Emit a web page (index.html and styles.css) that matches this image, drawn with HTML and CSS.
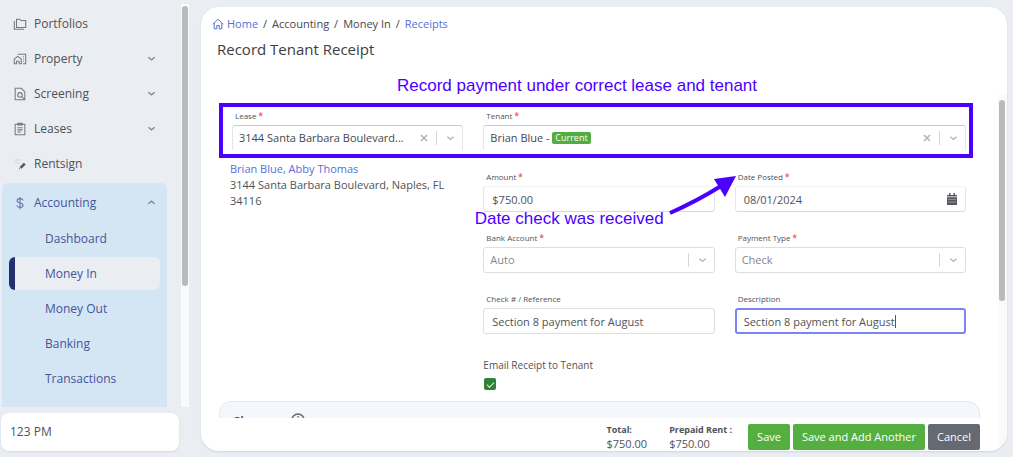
FILE: index.html
```html
<!DOCTYPE html>
<html lang="en">
<head>
<meta charset="utf-8">
<title>Record Tenant Receipt</title>
<link rel="stylesheet" href="styles.css">
</head>
<body>
<svg class="sprite" aria-hidden="true">
  <symbol id="down" viewBox="0 0 10 10"><path d="M1.5 3.500 L5 6.500 L8.500 3.500" fill="none" stroke="currentColor" stroke-width="1.4"/></symbol>
  <symbol id="clear" viewBox="0 0 10 10"><path d="M2 2 L8 8 M8 2 L2 8" fill="none" stroke="currentColor" stroke-width="1.6"/></symbol>
</svg>
<div class="app">
  <aside class="sidebar">
    <div class="nav-area">
      <nav class="nav">
        <a class="item" href="#"><svg class="icon" viewBox="0 0 16 16"><path d="M4 2.500h3.500l1.500 1.500h5.500v8H4zM1.500 4.500v9.500h11"/></svg><span>Portfolios</span></a>
        <a class="item" href="#"><svg class="icon" viewBox="0 0 16 16"><path d="M1.500 13.500v-5.500l4-3 4 3v5.500h-2.500v-3h-3v3zM6 3V2.500h8.500v11h-3M11.500 5.500h1M11.500 8h1M11.500 10.500h1"/></svg><span>Property</span><svg class="chev"><use href="#down"/></svg></a>
        <a class="item" href="#"><svg class="icon" viewBox="0 0 16 16"><path d="M2.500 1.500h7l4 4v9h-11zM10 11l3 3"/><circle cx="8" cy="9" r="2.600"/></svg><span>Screening</span><svg class="chev"><use href="#down"/></svg></a>
        <a class="item" href="#"><svg class="icon" viewBox="0 0 16 16"><path d="M2.500 2.500h11v12h-11zM5.500 1.500h5v2h-5zM5 6.500h6M5 9h6M5 11.500h4"/></svg><span>Leases</span><svg class="chev"><use href="#down"/></svg></a>
        <a class="item" href="#"><svg class="icon" viewBox="0 0 16 16"><path class="faint" d="M2 3.500h7M2 6.500h5"/><path class="pen" d="M8.500 12.500l5-5"/><path d="M7 14l1-1"/></svg><span>Rentsign</span></a>
        <div class="group">
          <a class="item" href="#"><svg class="icon" viewBox="0 0 16 16"><path d="M11.500 5C11 3.500 9.800 3 8 3 6 3 4.700 3.900 4.700 5.400 4.700 9 11.500 6.800 11.500 10.500 11.500 12 10 13 8 13 6 13 4.800 12.300 4.300 10.800M8 1v14"/></svg><span>Accounting</span><svg class="chev flip"><use href="#down"/></svg></a>
          <div class="sub">
            <a href="#">Dashboard</a>
            <a href="#" class="active" aria-current="page">Money In</a>
            <a href="#">Money Out</a>
            <a href="#">Banking</a>
            <a href="#">Transactions</a>
          </div>
        </div>
      </nav>
      <div class="rail"><div class="thumb nav-thumb"></div></div>
    </div>
    <div class="company">123 PM</div>
  </aside>

  <main class="card">
    <header class="head">
      <nav class="crumbs" aria-label="Breadcrumb">
        <a href="#"><svg class="home" viewBox="0 0 12 12"><path d="M.8 6.200 6 1.300l5.200 4.900M2.200 5.200v5.600h2.600V7.500h2.400v3.300h2.600V5.200"/></svg>Home</a><i>/</i><span>Accounting</span><i>/</i><span>Money In</span><i>/</i><a href="#">Receipts</a>
      </nav>
      <h1>Record Tenant Receipt</h1>
      <p class="note top-note">Record payment under correct lease and tenant</p>
    </header>

    <div class="scroll">
      <form class="form" id="receipt">
        <div class="frame"></div>
        <div class="left">
          <div class="field">
            <label for="lease">Lease <b>*</b></label>
            <div class="picker open">
              <select id="lease"><option>3144 Santa Barbara Boulevard...</option></select>
              <div class="tools"><button type="button" aria-label="Clear lease"><svg><use href="#clear"/></svg></button><svg class="arrow"><use href="#down"/></svg></div>
            </div>
          </div>
          <address><a href="#">Brian Blue, Abby Thomas</a><br>3144 Santa Barbara Boulevard, Naples, FL 34116</address>
        </div>
        <div class="fields">
          <div class="field wide">
            <label for="tenant">Tenant <b>*</b></label>
            <div class="picker open">
              <select id="tenant"><option>Brian Blue -</option></select>
              <span class="badge">Current</span>
              <div class="tools"><button type="button" aria-label="Clear tenant"><svg><use href="#clear"/></svg></button><svg class="arrow"><use href="#down"/></svg></div>
            </div>
          </div>
          <div class="field">
            <label for="amount">Amount <b>*</b></label>
            <input class="text soft" id="amount" value="$750.00">
          </div>
          <div class="field dated">
            <label for="date">Date Posted <b>*</b></label>
            <div class="picker soft">
              <input class="bare" id="date" value="08/01/2024">
              <svg class="calendar" viewBox="0 0 10 12"><path d="M0 2h10v1.600H0zM2 0h1.500v2H2zM6.500 0H8v2H6.500zM0 4.200h10V12H0z"/><path class="cells" d="M1.500 6.500h7M1.500 9h7"/></svg>
            </div>
            <p class="note date-note">Date check was received</p>
            <svg class="pointer" viewBox="0 0 68 44"><path d="M1 41Q28 29 52 14" fill="none" stroke="#4b00ff" stroke-width="4"/><path d="M67 4 45 7l11 18z" fill="#4b00ff"/></svg>
          </div>
          <div class="field">
            <label for="bank">Bank Account <b>*</b></label>
            <div class="picker">
              <select class="muted" id="bank"><option>Auto</option></select>
              <div class="tools"><svg class="arrow"><use href="#down"/></svg></div>
            </div>
          </div>
          <div class="field">
            <label for="type">Payment Type <b>*</b></label>
            <div class="picker">
              <select class="muted" id="type"><option>Check</option></select>
              <div class="tools"><svg class="arrow"><use href="#down"/></svg></div>
            </div>
          </div>
          <div class="field">
            <label for="ref">Check # / Reference</label>
            <input class="text" id="ref" value="Section 8 payment for August">
          </div>
          <div class="field">
            <label for="desc">Description</label>
            <div class="picker focus">
              <input class="bare" id="desc" value="Section 8 payment for August">
              <span class="caret"></span>
            </div>
          </div>
          <div class="email wide">
            <label for="mail">Email Receipt to Tenant</label>
            <input type="checkbox" id="mail" checked>
          </div>
        </div>
      </form>
      <section class="panel"><h2>Charges</h2><svg viewBox="0 0 14 14"><circle cx="7" cy="7" r="6"/><path d="M7 3v1.500M7 6v4.500"/></svg></section>
    </div>

    <div class="rail main-rail"><div class="thumb main-thumb"></div></div>

    <footer class="foot">
      <dl>
        <div><dt>Total:</dt><dd>$750.00</dd></div>
        <div><dt>Prepaid Rent :</dt><dd>$750.00</dd></div>
      </dl>
      <div class="actions">
        <button form="receipt">Save</button>
        <button form="receipt">Save and Add Another</button>
        <button type="button" class="cancel">Cancel</button>
      </div>
    </footer>
  </main>
</div>
</body>
</html>
```
FILE: styles.css
```css
* { box-sizing: border-box; }
body { margin: 0; background: #eaedf2; color: #505357; font: 11px/16px "Open Sans", "Noto Sans", sans-serif; }
a { color: #5570d8; text-decoration: none; }
button, input, select { font: inherit; color: inherit; }
p, h1, h2, dl, dd { margin: 0; }
.sprite { position: absolute; width: 0; height: 0; }
.app { display: flex; gap: 12px; height: 100vh; padding-right: 6px; overflow: hidden; }

.sidebar { width: 189px; flex: none; display: flex; flex-direction: column; gap: 6px; padding-bottom: 6px; }
.nav-area { flex: 1; min-height: 0; display: flex; justify-content: space-between; overflow: hidden; }
.nav { width: 167px; padding: 7px 0 0 2px; display: flex; flex-direction: column; gap: 2px; }
.item { flex: none; height: 33px; padding: 0 11px; display: flex; align-items: center; gap: 7px; color: #4e5155; font-size: 12px; }
.item span { flex: 1; }
.icon { width: 14px; height: 14px; fill: none; stroke: #77797d; stroke-width: 1.2; }
.icon .faint { stroke: #d3d6db; }
.icon .pen { stroke: #55585c; stroke-width: 3; }
.chev { width: 9px; height: 9px; color: #85888d; }
.flip { transform: rotate(180deg); }
.group { flex: none; height: 300px; margin-top: 1px; padding-top: 3px; border-radius: 6px; background: #d4e6f4; }
.group .item, .sub a { color: #46549a; }
.group .icon { stroke: #6674ab; }
.sub { display: flex; flex-direction: column; gap: 2px; padding: 3px 7px; }
.sub a { height: 33px; padding-left: 36px; font-size: 12px; line-height: 33px; border-radius: 6px; }
.sub .active { padding-left: 30px; border-left: 6px solid #262f70; background: #eaedf2; }
.company { height: 38px; margin: 0 10px 0 1px; padding: 0 9px; border-radius: 8px; background: #fff; box-shadow: 0 1px 2px #d5dae3; line-height: 38px; font-size: 12px; }

.rail { width: 8px; background: #fafafa; }
.nav-area .rail { margin-top: 4px; }
.thumb { width: 6px; margin: 0 auto; border-radius: 3px; background: #bababa; }
.nav-thumb { height: 280px; margin-top: 2px; }

.card { flex: 1; min-width: 0; margin: 7px 0 6px; display: grid; grid-template: auto 1fr 33px / 1fr 9px; border-radius: 18px; background: #fff; box-shadow: 0 1px 2px #cfd6e2; overflow: hidden; }
.head { grid-column: 1 / -1; position: relative; height: 88px; padding: 9px 11px; }
.crumbs { display: flex; color: #45484c; font-weight: 500; }
.crumbs i { width: 14px; text-align: center; font-style: normal; }
.crumbs a { display: flex; align-items: center; gap: 3px; }
.home { width: 12px; height: 12px; fill: none; stroke: #5570d8; stroke-width: 1; }
h1 { padding: 7px 5px; font-size: 15px; line-height: 20px; font-weight: 500; color: #3c3e41; }
.note { position: absolute; color: #4b00ff; font: 17px/20px "Liberation Sans", sans-serif; white-space: nowrap; }
.top-note { left: 196px; top: 69px; }

.scroll { min-height: 0; overflow: hidden; padding: 0 18px; }
.form { position: relative; margin: 15px 14px 0 13px; display: grid; grid-template-columns: repeat(3, minmax(0, 1fr)); gap: 20px; }
.frame { position: absolute; z-index: 1; top: -7px; left: -13px; right: -7px; height: 55px; border: 4px solid #4b00ff; pointer-events: none; }
.left { display: flex; flex-direction: column; gap: 10px; }
address { margin: 0 -2px; font-style: normal; }
.fields { grid-column: span 2; display: grid; grid-template-columns: repeat(2, minmax(0, 1fr)); gap: 20px; }
.wide { grid-column: 1 / -1; }
.field { display: flex; flex-direction: column; gap: 3px; }
.field label { height: 12px; padding-left: 3px; font-size: 8px; line-height: 12px; font-weight: 500; }
.field b { color: #e86a6a; }
.text, .picker { width: 100%; height: 26px; border: 1px solid #dcdee2; border-radius: 3px; background: #fff; }
.text { padding: 0 8px; outline: 0; }
.picker { display: grid; grid-template: 100% / 100%; align-items: center; }
.picker > * { grid-area: 1 / 1; }
.picker select { width: 100%; height: 100%; padding: 0 6px; border: 0; outline: 0; appearance: none; background: none; }
.bare { width: 100%; height: 100%; padding: 0 8px; border: 0; outline: 0; background: none; }
.open { border-color: #c9cbce #e3e5e8 transparent; }
.open select { color: #45484b; }
.soft { border-color: #f3f3f5 #e3e6ec #d5d9e2; }
.focus { border: 2px solid #7b83f5; }
.focus .bare { padding: 0 7px; }
.caret { width: 1px; height: 13px; margin-left: 158px; background: #555; }
.picker .muted { color: #85888c; }
.tools { justify-self: end; display: flex; align-items: center; gap: 7px; padding-right: 7px; color: #b3b5b8; pointer-events: none; }
.tools button { display: flex; padding: 0; border: 0; background: none; color: inherit; pointer-events: auto; }
.tools button svg { width: 10px; height: 10px; }
.arrow { width: 19px; height: 14px; padding: 2px 0 2px 9px; border-left: 1px solid #d5d7da; }
.badge { justify-self: start; margin-left: 68px; padding: 0 3px; border-radius: 2px; background: #4fae3f; color: #fff; font-size: 9px; line-height: 12px; font-weight: 500; pointer-events: none; }
.calendar { justify-self: end; width: 10px; height: 12px; margin-right: 8px; fill: #55585c; }
.cells { stroke: #c9cbce; stroke-width: 1; stroke-dasharray: 1 1; }
.dated { position: relative; }
.date-note { left: -260px; top: 38px; }
.pointer { position: absolute; left: -66px; top: 1px; width: 68px; height: 44px; }
.email { display: flex; flex-direction: column; align-items: flex-start; gap: 5px; padding-top: 3px; font-size: 10px; }
.email input { appearance: none; width: 12px; height: 12px; margin: 0 1px; border-radius: 2px; background: #2f8137; display: grid; place-items: center; }
.email input::after { content: ""; width: 6px; height: 3px; border: solid #dceedd; border-width: 0 0 1px 1px; transform: rotate(-45deg); }
.panel { display: flex; gap: 8px; height: 80px; margin-top: 11px; padding: 10px 12px; border: 1px solid #e5eaf0; border-radius: 12px; background: #f4f8fd; }
h2 { font-size: 13px; line-height: 18px; font-weight: 600; }
.panel svg { width: 14px; height: 14px; margin-top: 1px; fill: none; stroke: #66696d; stroke-width: 1.5; }
.main-rail { grid-area: 2 / 2 / 4 / 3; width: 9px; padding: 5px 2px 0 0; }
.main-thumb { width: 6px; height: 201px; }

.foot { grid-area: 3 / 1; display: flex; justify-content: flex-end; gap: 16px; padding: 6px 18px 0; }
dl { display: flex; gap: 22px; line-height: 16px; }
dt { font-size: 9px; line-height: 12px; font-weight: 700; }
.actions { display: flex; gap: 3px; }
.actions button { height: 26px; padding: 0 9px; border: 0; border-radius: 2px; background: #55af40; color: #fff; white-space: nowrap; }
.actions .cancel { background: #656972; }
```
